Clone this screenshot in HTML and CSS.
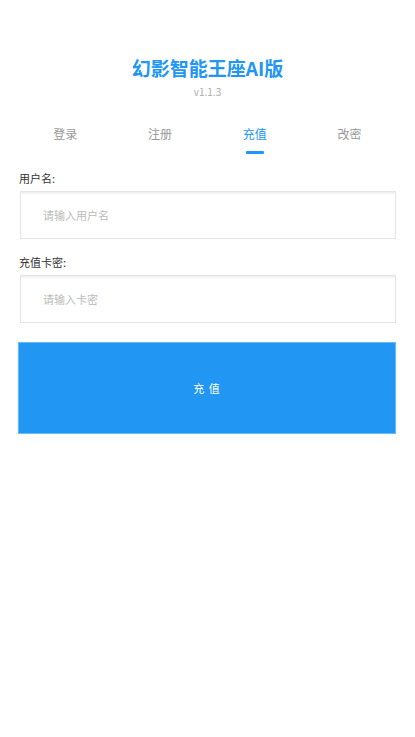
FILE: index.html
```html
<!DOCTYPE html>
<html lang="zh">
<head>
<meta charset="utf-8">
<title>幻影智能王座AI版</title>
<link rel="stylesheet" href="styles.css">
</head>
<body>
<div class="page">
  <header class="header">
    <h1 class="title">幻影智能王座AI版</h1>
    <div class="version">v1.1.3</div>
  </header>
  <nav class="tabs">
    <div class="tab">登录</div>
    <div class="tab">注册</div>
    <div class="tab active">充值<span class="bar"></span></div>
    <div class="tab">改密</div>
  </nav>
  <form class="form">
    <label class="label">用户名:</label>
    <div class="field"><input class="input" type="text" placeholder="请输入用户名"></div>
    <label class="label second">充值卡密:</label>
    <div class="field"><input class="input" type="text" placeholder="请输入卡密"></div>
    <button class="submit" type="button">充 值</button>
  </form>
</div>
</body>
</html>
```
FILE: styles.css
```css
* { box-sizing: border-box; }
html, body { margin: 0; padding: 0; background: #fff; }
body {
  font-family: "Noto Sans CJK SC", "Noto Sans", "Liberation Sans", sans-serif;
  color: #333;
}
.page { padding: 0 18px; }
.header { padding-top: 56px; text-align: center; }
.title {
  margin: 0;
  font-size: 19px;
  line-height: 24px;
  font-weight: 700;
  color: #2196f3;
}
.version {
  margin-top: 5px;
  font-size: 10px;
  line-height: 14px;
  color: #aaa;
}
.tabs {
  display: flex;
  margin-top: 26px;
}
.tab {
  flex: 1;
  display: flex;
  flex-direction: column;
  align-items: center;
  font-size: 12px;
  line-height: 18px;
  color: #999;
  height: 29px;
}
.tab.active { color: #2196f3; }
.bar {
  display: block;
  width: 18px;
  height: 3px;
  margin-top: 8px;
  border-radius: 1px;
  background: #2196f3;
}
.form { display: flex; flex-direction: column; margin-top: 16px; }
.label {
  display: block;
  font-size: 11px;
  line-height: 16px;
  color: #333;
  padding-left: 1px;
}
.label.second { margin-top: 15px; }
.field {
  margin: 5px 1px 0 2px;
  height: 48px;
  border: 1px solid #e4e4e4;
  box-shadow: inset 0 2px 2px rgba(0,0,0,0.06);
  background: #fff;
}
.input {
  width: 100%;
  height: 100%;
  border: 0;
  outline: 0;
  background: transparent;
  padding: 0 0 0 22px;
  font-family: inherit;
  font-size: 11px;
  color: #333;
}
.input::placeholder { color: #bbb; }
.submit {
  margin: 19px 1px 0 0;
  height: 92px;
  border: 1px solid #6ab8f7;
  background: #2196f3;
  color: #fff;
  font-family: inherit;
  font-size: 11px;
  letter-spacing: 1px;
  box-shadow: 0 1px 2px rgba(0,0,0,0.12);
  padding: 0;
}
```
